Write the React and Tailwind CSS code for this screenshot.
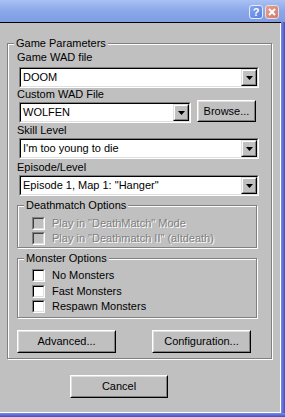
import React from 'react';

const font = "[font-family:'Liberation_Sans',Arial,sans-serif]";

const Raised = ({ className = '', children }) => (
    <div className={`border border-t-white border-l-white border-r-black border-b-black ${className}`}>
        <div className="w-full h-full border border-t-[#dfdfdf] border-l-[#dfdfdf] border-r-[#808080] border-b-[#808080] bg-[#c0c0c0] flex items-center justify-center">
            {children}
        </div>
    </div>
);

const Sunken = ({ className = '', inner = '', dark = 'border-t-black border-l-black', children }) => (
    <div className={`border border-t-[#808080] border-l-[#808080] border-r-white border-b-white ${className}`}>
        <div className={`w-full h-full border ${dark} border-r-[#dfdfdf] border-b-[#dfdfdf] ${inner}`}>
            {children}
        </div>
    </div>
);

const Combo = ({ value, width = 'w-[240px]', className = '' }) => (
    <Sunken className={`${width} h-[21px] ${className}`} inner="bg-white flex items-center">
        <span className="flex-1 pl-[2px] leading-[13px] truncate">{value}</span>
        <div className="h-[17px] w-[16px] border border-t-[#dfdfdf] border-l-[#dfdfdf] border-r-black border-b-black">
            <div className="w-full h-full border border-t-white border-l-white border-r-[#808080] border-b-[#808080] bg-[#c0c0c0] flex items-center justify-center">
                <svg width="7" height="4" viewBox="0 0 7 4">
                    <polygon points="0,0 7,0 3.5,4" fill="#000" />
                </svg>
            </div>
        </div>
    </Sunken>
);

const Check = ({ label, disabled, className = '' }) => (
    <div className={`flex items-center h-[13px] ${className}`}>
        <Sunken
            className="w-[13px] h-[13px] ml-[14px]"
            inner={disabled ? 'bg-[#c0c0c0]' : 'bg-white'}
            dark={disabled ? 'border-t-[#404040] border-l-[#404040]' : 'border-t-black border-l-black'}
        />
        <span className={`ml-[7px] leading-[13px] ${disabled ? 'text-[#808080] [text-shadow:1px_1px_0_#fff]' : ''}`}>{label}</span>
    </div>
);

const Group = ({ title, className = '', children }) => (
    <div className={`relative border border-[#808080] shadow-[inset_1px_1px_0_#fff,1px_1px_0_#fff] ${className}`}>
        <span className="absolute left-[6px] top-[-7px] px-[2px] bg-[#c0c0c0] leading-[13px]">{title}</span>
        {children}
    </div>
);

const App = () => {
    return (
        <div className={`w-[285px] h-[417px] flex flex-col overflow-hidden text-[11px] text-black ${font}`}>
            {/* title bar */}
            <div className="h-[22px] shrink-0 bg-gradient-to-b from-[#a9c1f3] via-[#8aa7e9] to-[#7f9de4] flex items-start justify-end pr-[6px] pt-[5px] gap-[2px]">
                <div className="w-[14px] h-[14px] rounded-[3px] border border-[#e4ecfb] bg-gradient-to-br from-[#86a4ee] to-[#5b7fe2] flex items-center justify-center text-white font-bold text-[11px] leading-none">?</div>
                <div className="w-[14px] h-[14px] rounded-[3px] border border-[#f3dcd6] bg-gradient-to-br from-[#e3a294] to-[#cf7a6c] flex items-center justify-center">
                    <svg width="8" height="8" viewBox="0 0 8 8">
                        <path d="M1 1 L7 7 M7 1 L1 7" stroke="#fff" strokeWidth="2" />
                    </svg>
                </div>
            </div>

            <div className="flex flex-1 min-h-0">
                <div className="w-[281px] flex flex-col">
                    <div className="h-px bg-black" />
                    <div className="flex-1 bg-[#c0c0c0] border-r border-b border-white flex flex-col">
                        <Group title="Game Parameters" className="ml-[7px] mt-[20px] w-[265px] pl-[9px] pb-[5px]">
                            <div className="mt-[7px] leading-[13px]">Game WAD file</div>
                            <Combo value="DOOM" className="mt-[3px] ml-[2px]" />

                            <div className="leading-[13px]">Custom WAD File</div>
                            <div className="flex items-start mt-[1px]">
                                <Combo value="WOLFEN" width="w-[172px]" className="ml-[2px]" />
                                <Raised className="-mt-[2px] ml-[6px] w-[59px] h-[22px]">Browse...</Raised>
                            </div>

                            <div className="mt-[1px] leading-[13px]">Skill Level</div>
                            <Combo value="I'm too young to die" className="mt-[1px] ml-[2px]" />

                            <div className="mt-[2px] leading-[13px]">Episode/Level</div>
                            <Combo value={'Episode 1, Map 1: "Hanger"'} className="mt-[1px] ml-[2px]" />

                            <Group title="Deathmatch Options" className="mt-[9px] w-[240px] pb-[2px]">
                                <Check disabled label={'Play in "DeathMatch" Mode'} className="mt-[11px]" />
                                <Check disabled label={'Play in "Deathmatch II" (altdeath)'} className="mt-[2px]" />
                            </Group>

                            <Group title="Monster Options" className="mt-[10px] w-[240px] pb-[4px]">
                                <Check label="No Monsters" className="mt-[10px]" />
                                <Check label="Fast Monsters" className="mt-[3px]" />
                                <Check label="Respawn Monsters" className="mt-[2px]" />
                            </Group>

                            <div className="flex mt-[12px]">
                                <Raised className="w-[99px] h-[23px]">Advanced...</Raised>
                                <Raised className="ml-[36px] w-[99px] h-[23px]">Configuration...</Raised>
                            </div>
                        </Group>

                        <Raised className="mt-[16px] ml-[70px] w-[98px] h-[23px]">Cancel</Raised>
                    </div>
                </div>
                <div className="w-[4px] bg-gradient-to-r from-[#7d8be3] to-[#3f4fc6]" />
            </div>
            <div className="h-[4px] shrink-0 bg-gradient-to-b from-[#7d8be3] to-[#3f4fc6]" />
        </div>
    );
};

export default App;
